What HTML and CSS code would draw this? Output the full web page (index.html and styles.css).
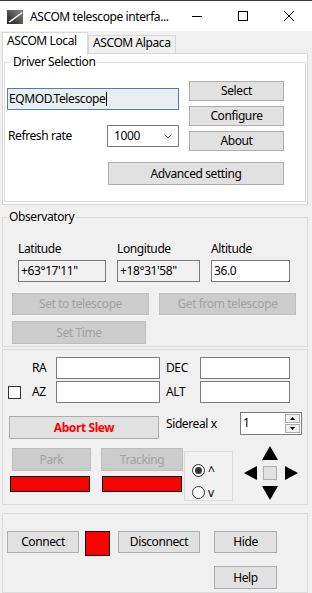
FILE: index.html
```html
<!DOCTYPE html>
<html lang="en">
<head>
    <meta charset="UTF-8">
    <meta name="viewport" content="width=device-width, initial-scale=1.0">
    <title>ASCOM telescope interface</title>
    <link rel="stylesheet" href="styles.css">
</head>

<body>
    <header class="titlebar">
        <svg class="app-icon" width="16" height="14" viewBox="0 0 16 14">
            <defs>
                <linearGradient id="sky" x1="0" y1="1" x2="1" y2="0">
                    <stop offset="0" stop-color="#1e1e1e"/>
                    <stop offset="1" stop-color="#8a8a8a"/>
                </linearGradient>
            </defs>
            <rect width="16" height="14" fill="url(#sky)"/>
            <polygon points="1,12 15,2 15,3.5 3,12.5" fill="#fff"/>
        </svg>
        <span class="title">ASCOM telescope interfa...</span>
        <div class="caption">
            <span><svg width="10" height="10"><line x1="0" y1="5.5" x2="10" y2="5.5" stroke="#000"/></svg></span>
            <span><svg width="10" height="10"><rect x="0.5" y="0.5" width="9" height="9" fill="none" stroke="#000"/></svg></span>
            <span><svg width="10" height="10"><path d="M0 0 L10 10 M10 0 L0 10" stroke="#000"/></svg></span>
        </div>
    </header>

    <nav class="tabs">
        <div class="tab active">ASCOM Local</div>
        <div class="tab">ASCOM Alpaca</div>
    </nav>

    <section class="tabpage">
        <fieldset class="group driver">
            <legend>Driver Selection</legend>
            <div class="driver-body">
                <div class="driver-cols">
                    <div class="driver-left">
                        <div class="textbox focused">EQMOD.Telescope<span class="caret"></span></div>
                        <div class="rate-row">
                            <span class="lbl">Refresh rate</span>
                            <div class="combo">
                                <span>1000</span>
                                <svg width="8" height="5" viewBox="0 0 8 5"><polyline points="0.5,0.5 4,4 7.5,0.5" fill="none" stroke="#606060"/></svg>
                            </div>
                        </div>
                    </div>
                    <div class="driver-right">
                        <button class="btn">Select</button>
                        <button class="btn">Configure</button>
                        <button class="btn">About</button>
                    </div>
                </div>
                <button class="btn advanced">Advanced setting</button>
            </div>
        </fieldset>
    </section>

    <fieldset class="group observatory">
        <legend>Observatory</legend>
        <div class="obs-fields">
            <span>Latitude</span>
            <span>Longitude</span>
            <span>Altitude</span>
            <div class="textbox readonly">+63°17'11"</div>
            <div class="textbox readonly">+18°31'58"</div>
            <div class="textbox">36.0</div>
        </div>
        <div class="obs-buttons">
            <button class="btn disabled">Set to telescope</button>
            <button class="btn disabled">Get from telescope</button>
            <button class="btn disabled set-time">Set Time</button>
        </div>
    </fieldset>

    <div class="group control">
        <div class="coords">
            <span class="lbl ra">RA</span>
            <div class="textbox"></div>
            <span class="lbl right">DEC</span>
            <div class="textbox"></div>
            <span class="checkbox"></span>
            <span class="lbl">AZ</span>
            <div class="textbox"></div>
            <span class="lbl right">ALT</span>
            <div class="textbox"></div>
        </div>

        <div class="slew-row">
            <button class="btn abort">Abort Slew</button>
            <span class="sidereal">Sidereal x</span>
            <div class="spinner">
                <span class="spin-value">1</span>
                <div class="spin-buttons">
                    <span><svg width="5" height="3"><polygon points="0,3 2.5,0 5,3" fill="#000"/></svg></span>
                    <span><svg width="5" height="3"><polygon points="0,0 2.5,3 5,0" fill="#000"/></svg></span>
                </div>
            </div>
        </div>

        <div class="mount-row">
            <div class="mount-col park">
                <button class="btn disabled">Park</button>
                <div class="status-bar"></div>
            </div>
            <div class="mount-col tracking">
                <button class="btn disabled">Tracking</button>
                <div class="status-bar"></div>
            </div>
            <div class="radio-box">
                <label class="radio-item"><span class="radio checked"></span>^</label>
                <label class="radio-item"><span class="radio"></span>v</label>
            </div>
            <div class="arrow-pad">
                <svg class="arrow up" width="16" height="14"><polygon points="8,0 16,14 0,14" fill="#000"/></svg>
                <svg class="arrow left" width="13" height="14"><polygon points="0,7 13,0 13,14" fill="#000"/></svg>
                <span class="stop"></span>
                <svg class="arrow right" width="13" height="14"><polygon points="13,7 0,0 0,14" fill="#000"/></svg>
                <svg class="arrow down" width="16" height="14"><polygon points="8,14 16,0 0,0" fill="#000"/></svg>
            </div>
        </div>
    </div>

    <footer class="group connection">
        <div class="connect-row">
            <button class="btn connect">Connect</button>
            <span class="led"></span>
            <button class="btn disconnect">Disconnect</button>
            <button class="btn hide">Hide</button>
        </div>
        <button class="btn help">Help</button>
    </footer>
</body>
</html>
```

FILE: styles.css
```css
/* General Styles */
* {
    margin: 0;
    padding: 0;
    box-sizing: border-box;
}

html, body {
    width: 312px;
    height: 593px;
    overflow: hidden;
}

body {
    background: #f0f0f0;
    font-family: 'Noto Sans', 'Open Sans', Arial, sans-serif;
    font-size: 12px;
    line-height: 14px;
    letter-spacing: -0.4px;
    white-space: nowrap;
    color: #000;
}

/* Title bar */
.titlebar {
    height: 31px;
    background: #fff;
    border-top: 1px solid #3a3a3a;
    display: flex;
    align-items: center;
}

.app-icon {
    margin-left: 7px;
    margin-top: 2px;
    flex-shrink: 0;
}

.title {
    margin-left: 7px;
    margin-top: 1px;
}

.caption {
    margin-left: auto;
    display: flex;
    height: 100%;
}

.caption span {
    width: 46px;
    display: flex;
    align-items: center;
    justify-content: center;
}

/* Tabs */
.tabs {
    height: 22px;
    display: flex;
    align-items: flex-start;
    padding-left: 2px;
}

.tab {
    height: 18px;
    margin-top: 4px;
    padding: 0 5px 0 4px;
    border: 1px solid #d9d9d9;
    border-bottom: none;
    background: #f0f0f0;
    width: 88px;
}

.tab.active {
    width: 86px;
    height: 23px;
    margin-top: 1px;
    padding-top: 1px;
    background: #fff;
    position: relative;
    z-index: 1;
}

.tabpage {
    margin: 0 4px 0 2px;
    background: #fff;
    border: 1px solid #d9d9d9;
}

/* Group boxes */
.group {
    border: 1px solid #dcdcdc;
    padding: 0;
    min-width: 0;
}

.group legend {
    margin-left: 4px;
    padding: 0 2px;
    line-height: 14px;
}

.driver {
    margin: 1px 1px 2px 1px;
}

.driver legend {
    margin-left: 6px;
}

.driver-body {
    padding: 12px 0 16px 2px;
}

.driver-cols {
    display: flex;
    gap: 10px;
}

.driver-left {
    width: 172px;
    padding-top: 7px;
}

.driver-right {
    width: 95px;
    display: flex;
    flex-direction: column;
    gap: 5px;
}

.driver-right .btn {
    height: 20px;
}

.rate-row {
    display: flex;
    align-items: center;
    margin-top: 15px;
}

.rate-row .lbl {
    width: 100px;
    padding-left: 1px;
}

.combo {
    width: 72px;
    height: 22px;
    border: 1px solid #7a7a7a;
    background: #fff;
    display: flex;
    align-items: center;
    justify-content: space-between;
    padding: 0 6px 0 6px;
}

.advanced {
    margin: 11px 0 0 101px;
    width: 176px;
    height: 20px;
}

/* Controls */
.btn {
    font: inherit;
    letter-spacing: inherit;
    color: #000;
    background: #e1e1e1;
    border: 1px solid #adadad;
    display: flex;
    align-items: center;
    justify-content: center;
    height: 23px;
}

.btn.disabled {
    background: #cccccc;
    border-color: #bfbfbf;
    color: #a3a3a3;
}

.textbox {
    height: 22px;
    border: 1px solid #7a7a7a;
    background: #fff;
    display: flex;
    align-items: center;
    padding-left: 2px;
}

.textbox.readonly {
    background: #f0f0f0;
}

.textbox.focused {
    background: #e9eef3;
    border-color: #557ba6;
    padding-left: 1px;
}

.caret {
    width: 1px;
    height: 14px;
    margin-left: 1px;
    background: #000;
}

/* Observatory */
.observatory {
    margin: 5px 4px 0 2px;
}

.obs-fields {
    display: grid;
    grid-template-columns: 88px 83px 79px;
    column-gap: 11px;
    row-gap: 4px;
    padding: 18px 0 0 15px;
}

.obs-buttons {
    display: grid;
    grid-template-columns: 137px 137px;
    column-gap: 10px;
    row-gap: 6px;
    padding: 11px 0 2px 9px;
}

.obs-buttons .btn {
    height: 22px;
}

.obs-buttons .set-time {
    width: 134px;
    height: 23px;
}

/* Telescope control */
.control {
    margin: 2px 4px 0 2px;
    padding-bottom: 3px;
}

.coords {
    display: grid;
    grid-template-columns: 24px 24px 104px 40px 90px;
    grid-template-rows: 22px 22px;
    row-gap: 2px;
    align-items: center;
    padding: 7px 0 0 5px;
}

.coords .ra {
    grid-column: 2;
}

.coords .right {
    padding-left: 6px;
}

.checkbox {
    width: 13px;
    height: 13px;
    border: 1px solid #333;
    background: #fff;
    margin-top: 1px;
}

.slew-row {
    display: flex;
    align-items: flex-start;
    margin-top: 9px;
    padding-left: 6px;
}

.abort {
    margin-top: 4px;
    width: 150px;
    color: #ff0000;
    font-weight: bold;
}

.sidereal {
    margin: 5px 0 0 7px;
    width: 74px;
}

.spinner {
    width: 62px;
    height: 23px;
    border: 1px solid #7a7a7a;
    background: #fff;
    display: flex;
    justify-content: space-between;
}

.spin-value {
    padding: 3px 0 0 2px;
}

.spin-buttons {
    display: flex;
    flex-direction: column;
    gap: 1px;
    padding: 1px 1px 1px 0;
}

.spin-buttons span {
    width: 15px;
    flex: 1;
    background: #f0f0f0;
    border: 1px solid #adadad;
    display: flex;
    align-items: center;
    justify-content: center;
}

.mount-row {
    display: flex;
    align-items: flex-start;
    margin-top: 7px;
    padding-left: 7px;
}

.mount-col {
    display: flex;
    flex-direction: column;
}

.park {
    width: 81px;
}

.park .btn {
    margin: 2px 0 0 2px;
    width: 79px;
}

.tracking {
    width: 82px;
    margin-left: 10px;
}

.tracking .btn {
    margin-top: 2px;
    width: 82px;
}

.tracking .status-bar {
    margin-left: 1px;
}

.status-bar {
    margin-top: 5px;
    width: 80px;
    height: 16px;
    background: #ff0000;
    border: 1px solid #000;
}

.radio-box {
    margin: 5px 0 0 1px;
    width: 49px;
    height: 50px;
    border: 1px solid #dcdcdc;
    display: flex;
    flex-direction: column;
    gap: 9px;
    padding: 12px 0 0 7px;
}

.radio-item {
    display: flex;
    align-items: center;
    gap: 3px;
    height: 13px;
}

.radio {
    width: 13px;
    height: 13px;
    border: 1px solid #333;
    border-radius: 50%;
    background: #fff;
    display: flex;
    align-items: center;
    justify-content: center;
}

.radio.checked::after {
    content: '';
    width: 7px;
    height: 7px;
    border-radius: 50%;
    background: #333;
}

.arrow-pad {
    margin-left: 11px;
    display: grid;
    grid-template-columns: 18px 18px 18px;
    grid-template-rows: 17px 20px 17px;
    align-items: center;
}

.arrow.up {
    grid-column: 2;
    grid-row: 1;
    align-self: start;
}

.arrow.left {
    grid-column: 1;
    grid-row: 2;
}

.stop {
    grid-column: 2;
    grid-row: 2;
    width: 14px;
    height: 14px;
    margin-left: 1px;
    background: #e1e1e1;
    border: 1px solid #adadad;
}

.arrow.right {
    grid-column: 3;
    grid-row: 2;
    justify-self: end;
}

.arrow.down {
    grid-column: 2;
    grid-row: 3;
    align-self: end;
}

/* Connection */
.connection {
    margin: 8px 4px 0 2px;
    padding: 17px 0 3px 4px;
}

.connect-row {
    display: flex;
    align-items: flex-start;
}

.connect-row .btn {
    height: 22px;
}

.connect {
    width: 72px;
}

.led {
    margin-left: 6px;
    width: 25px;
    height: 25px;
    background: #ff0000;
    border: 1px solid #000;
}

.disconnect {
    margin-left: 8px;
    width: 82px;
}

.hide {
    margin-left: 14px;
    width: 63px;
}

.help {
    margin: 10px 0 0 207px;
    width: 63px;
}
```
